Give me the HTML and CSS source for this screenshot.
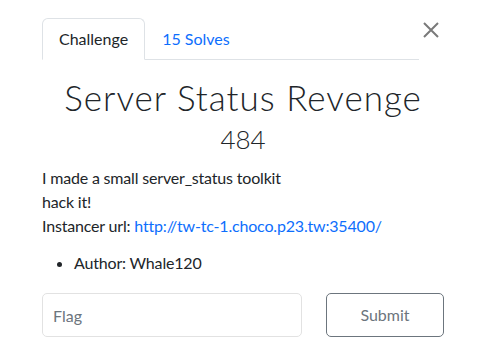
FILE: index.html
```html
<!DOCTYPE html>
<html lang="en">

<head>
    <meta charset="UTF-8">
    <meta name="viewport" content="width=device-width, initial-scale=1.0">
    <title>Server Status Revenge</title>
    <link rel="stylesheet" href="styles.css">
</head>

<body>
    <div class="modal-body">
        <div class="modal-head">
            <ul class="nav-tabs">
                <li class="nav-item active">Challenge</li>
                <li class="nav-item"><a href="#">15 Solves</a></li>
            </ul>
            <button class="close" aria-label="Close">
                <svg width="16" height="16" viewBox="0 0 16 16">
                    <path d="M1 1 L15 15 M15 1 L1 15" stroke="#7a7a7a" stroke-width="2" fill="none" />
                </svg>
            </button>
        </div>

        <h3 class="challenge-name">Server Status Revenge</h3>
        <h4 class="challenge-value">484</h4>

        <p class="challenge-desc">I made a small server_status toolkit<br>
            hack it!<br>
            Instancer url: <a href="#">http://tw-tc-1.choco.p23.tw:35400/</a></p>

        <ul class="challenge-meta">
            <li>Author: Whale120</li>
        </ul>

        <form class="submit-row">
            <input class="flag-input" type="text" placeholder="Flag">
            <button class="btn-submit" type="button">Submit</button>
        </form>
    </div>
</body>

</html>
```

FILE: styles.css
```css
html {
    font-family: Lato, "Open Sans", sans-serif;
    font-size: 16px;
    line-height: 1.5;
    color: #212529;
}

body {
    margin: 0;
    background: #fff;
}

a {
    color: #0d6efd;
    text-decoration: none;
}

.modal-body {
    width: 402px;
    margin-left: 42px;
    padding-top: 18px;
}

/* tabs + close button */

.modal-head {
    display: flex;
    align-items: flex-start;
}

.nav-tabs {
    flex: 1;
    display: flex;
    list-style: none;
    margin: 0 4px 0 0;
    padding: 0;
    border-bottom: 1px solid #dee2e6;
}

.nav-item {
    padding: 8px 16px;
    border: 1px solid transparent;
    border-top-left-radius: 6px;
    border-top-right-radius: 6px;
    margin-bottom: -1px;
}

.nav-item.active {
    border-color: #dee2e6 #dee2e6 #fff;
    background: #fff;
}

.close {
    background: none;
    border: 0;
    padding: 0;
    margin-top: 4px;
    margin-right: 5px;
    width: 16px;
    height: 16px;
}

/* title */

.challenge-name {
    text-align: center;
    font-size: 35px;
    font-weight: 300;
    line-height: 1.2;
    letter-spacing: 1px;
    margin: 16px 0 6px;
}

.challenge-value {
    text-align: center;
    font-size: 26px;
    font-weight: 300;
    line-height: 1.2;
    margin: 0 0 11px;
}

/* description */

.challenge-desc,
.challenge-meta {
    letter-spacing: -0.18px;
}

.challenge-desc {
    margin: 0 0 13px;
}

.challenge-meta {
    margin: 0 0 18px;
    padding-left: 32px;
}

/* flag form */

.submit-row {
    display: flex;
    gap: 24px;
}

.flag-input {
    flex: 1;
    height: 44px;
    box-sizing: border-box;
    padding: 9px 10px;
    font: inherit;
    color: #212529;
    border: 1px solid #e2e2e2;
    border-radius: 5px;
}

.flag-input::placeholder {
    color: #6c757d;
}

.btn-submit {
    width: 118px;
    height: 44px;
    font: inherit;
    color: #6c757d;
    background: #fff;
    border: 1px solid #6c757d;
    border-radius: 5px;
}
```
